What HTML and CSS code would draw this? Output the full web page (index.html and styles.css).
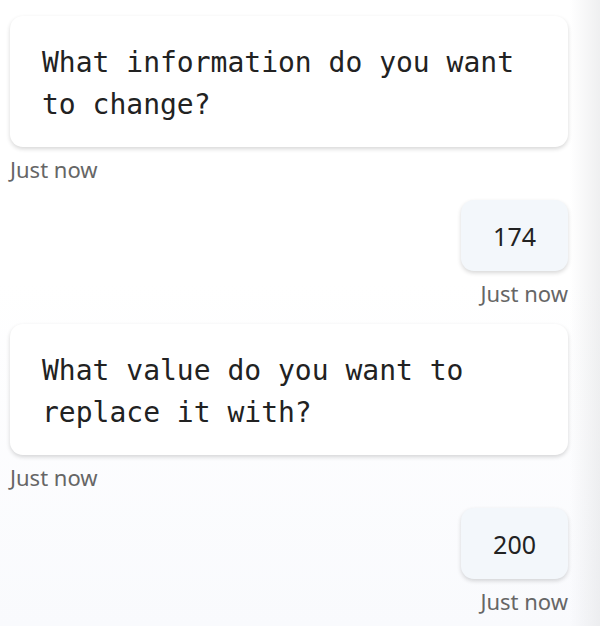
FILE: index.html
```html
<!DOCTYPE html>
<html lang="en">
<head>
<meta charset="utf-8">
<title>Chat</title>
<link rel="stylesheet" href="styles.css">
</head>
<body>
<main class="chat">
  <div class="msg bot">
    <div class="bubble bot-bubble">What information do you want to change?</div>
    <div class="time">Just now</div>
  </div>
  <div class="msg user">
    <div class="bubble user-bubble">174</div>
    <div class="time">Just now</div>
  </div>
  <div class="msg bot">
    <div class="bubble bot-bubble">What value do you want to replace it with?</div>
    <div class="time">Just now</div>
  </div>
  <div class="msg user">
    <div class="bubble user-bubble">200</div>
    <div class="time">Just now</div>
  </div>
</main>
</body>
</html>
```
FILE: styles.css
```css
html, body {
  margin: 0;
  padding: 0;
  height: 100%;
}
body {
  background:
    linear-gradient(to right, rgba(255,255,255,0) 0%, rgba(255,255,255,0) 95%, rgba(228,229,231,0.6) 100%),
    linear-gradient(to bottom, #ffffff 0%, #ffffff 45%, #f9fafd 100%);
  font-family: "Noto Sans", "Open Sans", sans-serif;
}
.chat {
  display: flex;
  flex-direction: column;
  gap: 15px;
  padding: 16px 32px 0 10px;
}
.msg {
  display: flex;
  flex-direction: column;
}
.msg.user {
  align-items: flex-end;
}
.bubble {
  border-radius: 13px;
  box-shadow: 0 2px 4px rgba(0, 0, 0, 0.16);
  color: #222;
}
.bot-bubble {
  background: #fff;
  font-family: "DejaVu Sans Mono", monospace;
  font-size: 28px;
  line-height: 42px;
  padding: 26px 32px 21px 32px;
}
.user-bubble {
  background: #f3f7fb;
  font-family: "Noto Sans", sans-serif;
  font-size: 25px;
  line-height: 39px;
  padding: 17px 32px 15px;
  text-align: center;
}
.time {
  margin-top: 6px;
  font-family: "Noto Sans", sans-serif;
  font-size: 22px;
  line-height: 32px;
  color: #666;
  font-weight: 400;
}
```
